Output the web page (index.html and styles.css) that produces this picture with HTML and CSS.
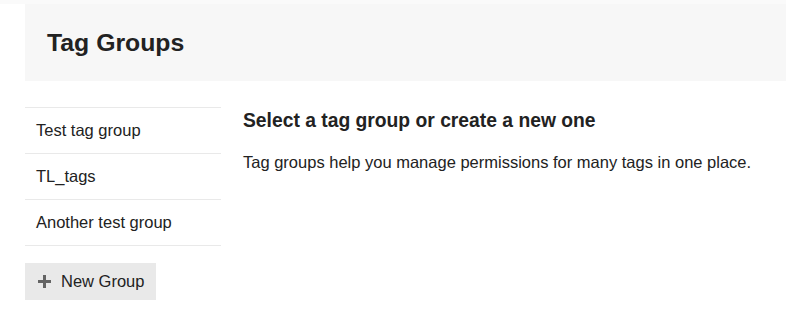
FILE: index.html
```html
<!DOCTYPE html>
<html>
<head>
<meta charset="utf-8">
<link rel="stylesheet" href="styles.css">
</head>
<body>
<div class="topband"></div>
<div class="page">
  <header class="header"><h1 class="title">Tag Groups</h1></header>
  <div class="content">
    <aside class="sidebar">
      <ul class="groups">
        <li class="group">Test tag group</li>
        <li class="group">TL_tags</li>
        <li class="group">Another test group</li>
      </ul>
      <button class="btn-new">
        <svg class="plus" width="15" height="15" viewBox="0 0 15 15"><path d="M6 1h3v5h5v3H9v5H6V9H1V6h5z" fill="#646464"/></svg>
        <span>New Group</span>
      </button>
    </aside>
    <main class="main">
      <h2 class="main-title">Select a tag group or create a new one</h2>
      <p class="main-text">Tag groups help you manage permissions for many tags in one place.</p>
    </main>
  </div>
</div>
</body>
</html>
```
FILE: styles.css
```css
* { box-sizing: border-box; }
html, body { margin: 0; padding: 0; background: #fff; }
body { font-family: "Liberation Sans", Arial, sans-serif; color: #222; font-size: 16.5px; }
.topband { height: 4px; background: #fafafa; }
.page { padding-left: 25px; }
.header { height: 77px; background: #f7f7f7; display: flex; align-items: center; padding-left: 22px; padding-top: 1px; }
.title { margin: 0; font-size: 24.8px; font-weight: bold; line-height: 1; color: #222; }
.content { display: flex; padding-top: 26px; }
.sidebar { width: 196px; flex: none; }
.groups { list-style: none; margin: 0; padding: 0; border-bottom: 1px solid #e9e9e9; }
.group { border-top: 1px solid #e9e9e9; height: 46px; display: flex; align-items: center; padding-left: 11px; font-size: 16.5px; }
.btn-new { margin-top: 17px; height: 37px; width: 131px; border: 0; background: #e9e9e9; display: flex; align-items: center; padding: 0 0 0 12px; font-family: inherit; font-size: 16.5px; color: #222; gap: 9px; }
.plus { display: block; }
.main { padding-left: 22px; padding-top: 3px; }
.main-title { margin: 0; font-size: 19.3px; font-weight: bold; line-height: 22px; }
.main-text { margin: 20px 0 0; font-size: 16.5px; line-height: 20px; }
```
